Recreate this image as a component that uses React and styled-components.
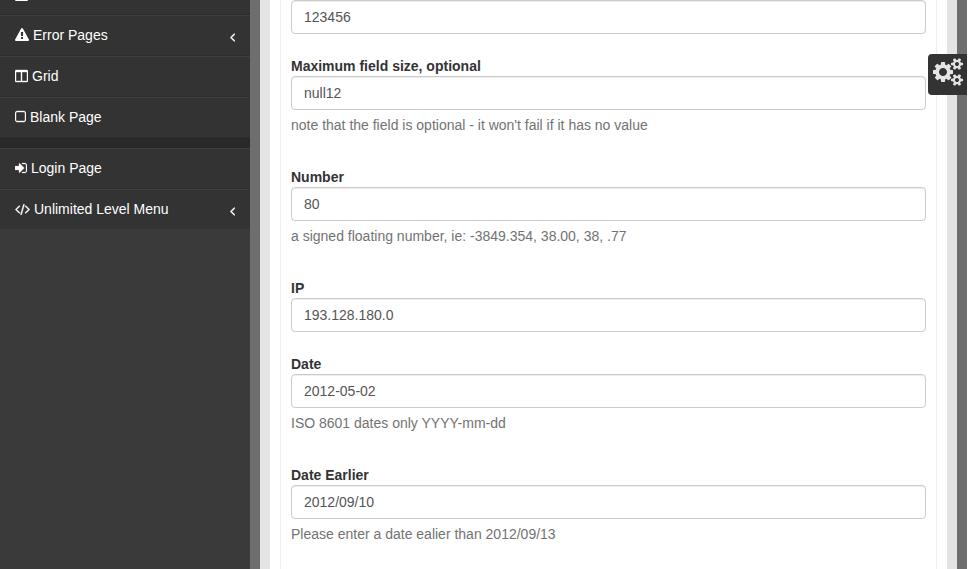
import React from "react";
import styled, { createGlobalStyle } from "styled-components";

const GlobalStyle = createGlobalStyle`
  * { box-sizing: border-box; }
  body {
    margin: 0;
    background: #fff;
    font-family: "Liberation Sans", Arial, sans-serif;
    font-size: 14px;
    line-height: 20px;
    color: #333;
  }
`;

const Shell = styled.div`
  display: grid;
  grid-template-columns: 250px minmax(0, 1fr);
  height: 100vh;
  margin-right: 12px;
  overflow: hidden;
  background: #6e6e6e;
`;

const Sidebar = styled.nav`
  background: #3a3a3a;
  overflow: hidden;
`;

const Menu = styled.ul`
  list-style: none;
  margin: -26px 0 0;
  padding: 0;
`;

const MenuItem = styled.li`
  background: #333;
  border-top: 1px solid #3e3e3e;
`;

const MenuLink = styled.a`
  display: flex;
  align-items: center;
  gap: 4px;
  height: ${(p) => (p.$last ? 39 : 40)}px;
  padding: 0 15px ${(p) => (p.$last ? 1 : 2)}px;
  border-bottom: 1px solid ${(p) => (p.$last ? "#333" : "#2d2d2d")};
  color: #fff;
  text-decoration: none;
`;

const MenuLabel = styled.span`
  flex: 1;
`;

const Divider = styled.li`
  height: 10px;
  background: #292929;
`;

const Glyph = styled.svg`
  display: block;
  flex: none;
  height: ${(p) => p.$size}px;
  fill: currentColor;
  stroke: currentColor;
  stroke-width: ${(p) => p.$weight};
`;

const Chevron = styled.span`
  display: flex;
  padding-top: 4px;
`;

const Content = styled.main`
  margin: 0 10px;
  padding: 0 10px;
  background: #e4e4e4;
  overflow: hidden;
`;

const Sheet = styled.div`
  min-height: 100vh;
  padding: 0 10px;
  background: #fff;
`;

const Form = styled.form`
  display: flex;
  flex-direction: column;
  gap: 22px;
  min-height: 100vh;
  padding: 0 10px;
  border: solid #eee;
  border-width: 0 1px;
`;

const Field = styled.div`
  display: flex;
  flex-direction: column;
`;

const Label = styled.label`
  font-weight: bold;
`;

const Input = styled.input`
  width: 100%;
  height: 34px;
  padding: 6px 12px;
  border: 1px solid #ccc;
  border-radius: 4px;
  background: #fff;
  box-shadow: inset 0 1px 1px rgba(0, 0, 0, 0.075);
  font: inherit;
  color: #555;
`;

const Help = styled.p`
  margin: 5px 0 10px;
  color: #737373;
`;

const SettingsButton = styled.button`
  position: fixed;
  top: 54px;
  right: 12px;
  display: flex;
  align-items: flex-start;
  padding: 4px 4px 9px 5px;
  border: 0;
  border-radius: 4px 0 0 4px;
  background: #333;
  color: #e4e4e4;
`;

const GEAR_SMALL =
  "v140q0 16-149 31-12 27-30 52 51 113 51 138 0 4-4 7-122 71-124 71-8 0-46-47t-52-68q-20 2-30 2t-30-2q-14 21-52 68t-46 47q-2 0-124-71-4-3-4-7 0-25 51-138-18-25-30-52-149-15-149-31v-140q0-16 149-31 13-29 30-52-51-113-51-138 0-4 4-7 4-2 35-20t59-34 30-16q8 0 46 46.5t52 67.5q20-2 30-2t30 2q51-71 92-112l6-2q4 0 124 70 4 3 4 7 0 25-51 138 17 23 30 52 149 15 149 31z";

const ICONS = {
  table: {
    x: 64,
    y: -128,
    w: 1664,
    d: "M64 288q0-66 47-113t113-47h1344q66 0 113 47t47 113v1216q0 66-47 113t-113 47h-1344q-66 0-113-47t-47-113zM192 512v256h384v-256zM704 512v256h384v-256zM1216 512v256h384v-256zM192 896v256h384v-256zM704 896v256h384v-256zM1216 896v256h384v-256zM192 1280v256h384v-256zM704 1280v256h384v-256zM1216 1280v256h384v-256z",
  },
  warning: {
    x: 0,
    w: 1792,
    d: "M1024 1375v-190q0-14-9.5-23.5t-22.5-9.5h-192q-13 0-22.5 9.5t-9.5 23.5v190q0 14 9.5 23.5t22.5 9.5h192q13 0 22.5-9.5t9.5-23.5zm-2-374l18-459q0-12-10-19-13-11-24-11h-220q-11 0-24 11-10 7-10 21l17 457q0 10 10 16.5t24 6.5h185q14 0 23.5-6.5t10.5-16.5zm-14-934l768 1408q35 63-2 126-17 29-46.5 46t-63.5 17h-1536q-34 0-63.5-17t-46.5-46q-37-63-2-126l768-1408q17-31 47-49t65-18 65 18 47 49z",
  },
  columns: {
    x: 64,
    w: 1664,
    weight: 50,
    d: "M224 1536h608v-1152h-640v1120q0 13 9.5 22.5t22.5 9.5zm1376-32v-1120h-640v1152h608q13 0 22.5-9.5t9.5-22.5zm128-1216v1216q0 66-47 113t-113 47h-1344q-66 0-113-47t-47-113v-1216q0-66 47-113t113-47h1344q66 0 113 47t47 113z",
  },
  square: {
    x: 192,
    w: 1408,
    weight: 50,
    d: "M1312 256h-832q-66 0-113 47t-47 113v832q0 66 47 113t113 47h832q66 0 113-47t47-113v-832q0-66-47-113t-113-47zm288 160v832q0 119-84.5 203.5t-203.5 84.5h-832q-119 0-203.5-84.5t-84.5-203.5v-832q0-119 84.5-203.5t203.5-84.5h832q119 0 203.5 84.5t84.5 203.5z",
  },
  signIn: {
    x: 128,
    w: 1536,
    weight: 30,
    d: "M1312 896q0 26-19 45l-544 544q-19 19-45 19t-45-19-19-45v-288h-448q-26 0-45-19t-19-45v-384q0-26 19-45t45-19h448v-288q0-26 19-45t45-19 45 19l544 544q19 19 19 45zm352-352v704q0 119-84.5 203.5t-203.5 84.5h-320q-13 0-22.5-9.5t-9.5-22.5q0-4-1-20t-.5-26.5 3-23.5 10-19.5 20.5-6.5h320q66 0 113-47t47-113v-704q0-66-47-113t-113-47h-312l-11.5-1-11.5-3-8-5.5-7-9-2-13.5q0-4-1-20t-.5-26.5 3-23.5 10-19.5 20.5-6.5h320q119 0 203.5 84.5t84.5 203.5z",
  },
  code: {
    x: -64,
    w: 1920,
    weight: 60,
    d: "M553 1399l-50 50q-10 10-23 10t-23-10l-466-466q-10-10-10-23t10-23l466-466q10-10 23-10t23 10l50 50q10 10 10 23t-10 23l-393 393 393 393q10 10 10 23t-10 23zm591-1067l-373 1291q-4 13-15.5 19.5t-23.5 2.5l-62-17q-13-4-19.5-15.5t-2.5-24.5l373-1291q4-13 15.5-19.5t23.5-2.5l62 17q13 4 19.5 15.5t2.5 24.5zm657 651l-466 466q-10 10-23 10t-23-10l-50-50q-10-10-10-23t10-23l393-393-393-393q-10-10-10-23t10-23l50-50q10-10 23-10t23 10l466 466q10 10 10 23t-10 23z",
  },
  angleLeft: {
    x: 576,
    w: 640,
    weight: 80,
    d: "M1203 544q0 13-10 23l-393 393 393 393q10 10 10 23t-10 23l-50 50q-10 10-23 10t-23-10l-466-466q-10-10-10-23t10-23l466-466q10-10 23-10t23 10l50 50q10 10 10 23z",
  },
  cogs: {
    x: -64,
    w: 1920,
    d:
      "M832 896q0-106-75-181t-181-75-181 75-75 181 75 181 181 75 181-75 75-181zm768 512q0-52-38-90t-90-38-90 38-38 90q0 53 37.5 90.5t90.5 37.5 90.5-37.5 37.5-90.5zm0-1024q0-52-38-90t-90-38-90 38-38 90q0 53 37.5 90.5t90.5 37.5 90.5-37.5 37.5-90.5zm-384 421v185q0 10-7 19.5t-16 10.5l-155 24q-11 35-32 76 34 48 90 115 7 11 7 20 0 12-7 19-23 30-82.5 89.5t-78.5 59.5q-11 0-21-7l-115-90q-37 19-77 31-11 108-23 155-7 24-30 24h-186q-11 0-20-7.5t-10-17.5l-23-153q-34-10-75-31l-118 89q-7 7-20 7-11 0-21-8-144-133-144-160 0-9 7-19 10-14 41-53t47-61q-23-44-35-82l-152-24q-10-1-17-9.5t-7-19.5v-185q0-10 7-19.5t16-10.5l155-24q11-35 32-76-34-48-90-115-7-11-7-20 0-12 7-20 22-30 82-89t79-59q11 0 21 7l115 90q34-18 77-32 11-108 23-154 7-24 30-24h186q11 0 20 7.5t10 17.5l23 153q34 10 75 31l118-89q8-7 20-7 11 0 21 8 144 133 144 160 0 8-7 19-12 16-42 54t-45 60q23 48 34 82l152 23q10 2 17 10.5t7 19.5zm640 533" +
      GEAR_SMALL +
      "m0-1024" +
      GEAR_SMALL,
  },
};

function Icon({ name, size = 14 }) {
  const { x, y = 0, w, d, weight = 0 } = ICONS[name];
  return (
    <Glyph $size={size} $weight={weight} viewBox={`${x} ${y} ${w} 1792`} aria-hidden="true">
      <path fillRule="evenodd" d={d} />
    </Glyph>
  );
}

function Entry({ icon, label, nested, last }) {
  return (
    <MenuItem>
      <MenuLink href="#" $last={last} aria-label={label ? undefined : icon}>
        <Icon name={icon} />
        <MenuLabel>{label}</MenuLabel>
        {nested && (
          <Chevron>
            <Icon name="angleLeft" />
          </Chevron>
        )}
      </MenuLink>
    </MenuItem>
  );
}

const FIELDS = [
  {
    id: "max-size",
    label: "Maximum field size, optional",
    value: "null12",
    help: "note that the field is optional - it won't fail if it has no value",
  },
  {
    id: "number",
    label: "Number",
    value: "80",
    help: "a signed floating number, ie: -3849.354, 38.00, 38, .77",
  },
  { id: "ip", label: "IP", value: "193.128.180.0" },
  { id: "date", label: "Date", value: "2012-05-02", help: "ISO 8601 dates only YYYY-mm-dd" },
  {
    id: "date-earlier",
    label: "Date Earlier",
    value: "2012/09/10",
    help: "Please enter a date ealier than 2012/09/13",
  },
];

export default function App() {
  return (
    <>
      <GlobalStyle />
      <Shell>
        <Sidebar>
          <Menu>
            <Entry icon="table" />
            <Entry icon="warning" label="Error Pages" nested />
            <Entry icon="columns" label="Grid" />
            <Entry icon="square" label="Blank Page" />
            <Divider />
            <Entry icon="signIn" label="Login Page" />
            <Entry icon="code" label="Unlimited Level Menu" nested last />
          </Menu>
        </Sidebar>
        <Content>
          <Sheet>
            <Form>
              <Field>
                <Input aria-label="Field size" defaultValue="123456" />
              </Field>
              {FIELDS.map(({ id, label, value, help }) => (
                <Field key={id}>
                  <Label htmlFor={id}>{label}</Label>
                  <Input id={id} defaultValue={value} />
                  {help && <Help>{help}</Help>}
                </Field>
              ))}
            </Form>
          </Sheet>
        </Content>
        <SettingsButton type="button" aria-label="Settings">
          <Icon name="cogs" size={28} />
        </SettingsButton>
      </Shell>
    </>
  );
}
